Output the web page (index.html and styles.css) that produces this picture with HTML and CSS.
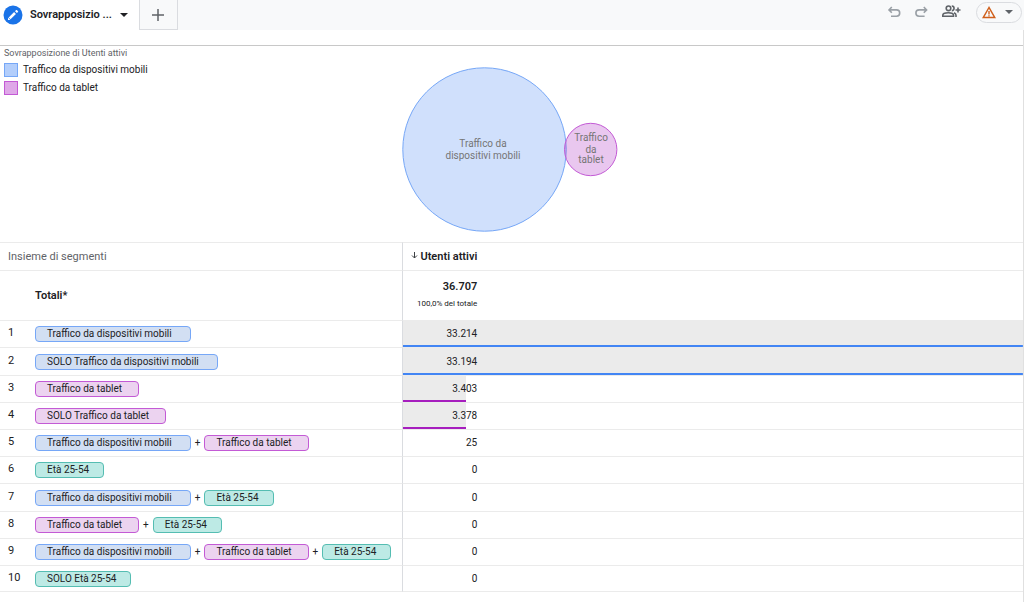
FILE: index.html
```html
<!DOCTYPE html>
<html lang="it">
<head>
<meta charset="utf-8">
<title>Sovrapposizione segmenti</title>
<link rel="stylesheet" href="styles.css">
</head>
<body>
<header class="topbar">
  <nav class="tabs">
    <button class="tab" type="button">
      <svg class="tab-icon" width="20" height="20" viewBox="0 0 20 20" aria-hidden="true"><circle cx="10" cy="10" r="9.500" fill="#1a73e8"/><path d="M6.600 13.400 12 8" stroke="#fff" stroke-width="2.600"/><path d="M5 15v-2.400L7.400 15ZM12 6.200l1.100-1.100q.4-.4.8 0l1.100 1.100q.4.4 0 .8L13.900 8.100Z" fill="#fff"/></svg>
      <span>Sovrapposizio ...</span>
      <svg width="8" height="4" viewBox="0 0 8 4" aria-hidden="true"><path d="M0 0h8L4 4z" fill="#202124"/></svg>
    </button>
    <button class="tab-add" type="button" aria-label="Aggiungi scheda"><svg width="14" height="14" viewBox="0 0 14 14" aria-hidden="true"><path d="M7 1v12M1 7h12" stroke="#5f6368" stroke-width="1.500"/></svg></button>
  </nav>
  <div class="actions">
    <button class="action" type="button" aria-label="Annulla"><svg width="14" height="14" viewBox="0 0 14 14" fill="none" stroke="#9aa0a6" stroke-width="1.600" aria-hidden="true"><path d="M4.800 2 2 4.900 4.800 7.800M2.200 4.900h7.300a3.200 3.200 0 0 1 0 6.400H4"/></svg></button>
    <button class="action" type="button" aria-label="Ripeti"><svg width="14" height="14" viewBox="0 0 14 14" fill="none" stroke="#9aa0a6" stroke-width="1.600" aria-hidden="true"><path d="M9.800 2l2.800 2.900-2.800 2.900M12.400 4.900H5.100a3.200 3.200 0 0 0 0 6.400h5.500"/></svg></button>
    <button class="action action-share" type="button" aria-label="Condividi"><svg width="20" height="14" viewBox="0 0 20 14" fill="none" stroke="#5f6368" stroke-width="1.600" aria-hidden="true"><circle cx="7.500" cy="3.300" r="2.300"/><path d="M1.800 11.300v-1.100c0-1.500 2.800-2.400 5.500-2.400s5.200.9 5.200 2.400v1.100z"/><path d="M10.800 1c3 0 3 4.600 0 4.600M13 7.800c1.600.6 2 1.300 2 2.400v1.900M17 2.500v5M14.500 5h5"/></svg></button>
    <button class="status" type="button" aria-label="Avvisi">
      <svg width="14" height="13" viewBox="0 0 14 13" aria-hidden="true"><path d="M7 1.500 1.200 11.600h11.600z" fill="none" stroke="#d0601c" stroke-width="1.500"/><path d="M7 5v3.500M7 9.300v1.300" stroke="#d0601c" stroke-width="1.400"/></svg>
      <svg width="8" height="4" viewBox="0 0 8 4" aria-hidden="true"><path d="M0 0h8L4 4z" fill="#5f6368"/></svg>
    </button>
  </div>
</header>
<main class="report">
  <section class="overlap">
    <div class="legend">
      <h1 class="legend-title">Sovrapposizione di Utenti attivi</h1>
      <ul class="legend-list">
        <li class="legend-item"><span class="swatch swatch-blue"></span>Traffico da dispositivi mobili</li>
        <li class="legend-item"><span class="swatch swatch-purple"></span>Traffico da tablet</li>
      </ul>
    </div>
    <svg class="venn" width="216" height="166" viewBox="0 0 216 166" role="img" aria-label="Diagramma di Venn">
      <circle cx="82.500" cy="82.500" r="81.700" fill="#4285f4" fill-opacity=".25" stroke="#76a7f7"/>
      <circle cx="188.700" cy="82.500" r="26.200" fill="#a61ebe" fill-opacity=".25" stroke="#c35ad5"/>
      <g class="venn-label"><text x="81" y="80">Traffico da</text><text x="81" y="92">dispositivi mobili</text><text x="189" y="74">Traffico</text><text x="189" y="86">da</text><text x="189" y="96">tablet</text></g>
    </svg>
  </section>
  <table class="segments">
    <colgroup><col class="col-index"><col class="col-set"><col class="col-metric"><col></colgroup>
    <thead>
      <tr class="head"><th colspan="2" scope="col" class="head-set">Insieme di segmenti</th><th scope="col" class="metric"><svg class="sort" width="7" height="8" viewBox="0 0 7 8" aria-hidden="true"><path d="M3.500 0v6M1 3.500l2.500 2.500L6 3.500" fill="none" stroke="#3c4043"/></svg>Utenti attivi</th><td></td></tr>
      <tr class="totals"><td></td><th scope="row" class="set">Totali*</th><td class="metric"><div class="total">36.707</div><div class="share">100,0% del totale</div></td><td></td></tr>
    </thead>
    <tbody>
      <tr class="row full"><td class="index">1</td><td class="set"><span class="chip blue">Traffico da dispositivi mobili</span></td><td class="metric">33.214</td><td></td></tr>
      <tr class="row full"><td class="index">2</td><td class="set"><span class="chip blue">SOLO Traffico da dispositivi mobili</span></td><td class="metric">33.194</td><td></td></tr>
      <tr class="row part"><td class="index">3</td><td class="set"><span class="chip purple">Traffico da tablet</span></td><td class="metric">3.403</td><td></td></tr>
      <tr class="row part"><td class="index">4</td><td class="set"><span class="chip purple">SOLO Traffico da tablet</span></td><td class="metric">3.378</td><td></td></tr>
      <tr class="row"><td class="index">5</td><td class="set"><div class="chips"><span class="chip blue">Traffico da dispositivi mobili</span>+<span class="chip purple">Traffico da tablet</span></div></td><td class="metric">25</td><td></td></tr>
      <tr class="row"><td class="index">6</td><td class="set"><span class="chip teal">Età 25-54</span></td><td class="metric">0</td><td></td></tr>
      <tr class="row"><td class="index">7</td><td class="set"><div class="chips"><span class="chip blue">Traffico da dispositivi mobili</span>+<span class="chip teal">Età 25-54</span></div></td><td class="metric">0</td><td></td></tr>
      <tr class="row"><td class="index">8</td><td class="set"><div class="chips"><span class="chip purple">Traffico da tablet</span>+<span class="chip teal">Età 25-54</span></div></td><td class="metric">0</td><td></td></tr>
      <tr class="row"><td class="index">9</td><td class="set"><div class="chips"><span class="chip blue">Traffico da dispositivi mobili</span>+<span class="chip purple">Traffico da tablet</span>+<span class="chip teal">Età 25-54</span></div></td><td class="metric">0</td><td></td></tr>
      <tr class="row"><td class="index">10</td><td class="set"><span class="chip teal">SOLO Età 25-54</span></td><td class="metric">0</td><td></td></tr>
    </tbody>
  </table>
</main>
</body>
</html>
```

FILE: styles.css
```css
* { box-sizing: border-box; }
body {
  margin: 0;
  min-height: 100vh;
  display: flex;
  flex-direction: column;
  background: #fff;
  color: #202124;
  font: 10px/12px Roboto, "Liberation Sans", sans-serif;
}
button {
  border: 0;
  padding: 0;
  background: none;
  color: inherit;
  font: inherit;
  cursor: pointer;
}

.topbar {
  display: flex;
  justify-content: space-between;
  height: 30px;
  background: #f8f9fa;
}
.tabs { display: flex; }
.tab {
  display: flex;
  align-items: center;
  padding: 0 11px 0 3px;
  background: #fff;
  font-size: 11px;
  font-weight: 600;
  white-space: nowrap;
}
.tab-icon { margin-right: 7px; }
.tab span { margin-right: 8px; }
.tab-add {
  display: grid;
  place-items: center;
  width: 39px;
  border: solid #dadce0;
  border-width: 0 1px 1px;
}
.actions {
  display: flex;
  align-items: center;
  gap: 13px;
  padding: 0 2px 6px 0;
}
.action { display: flex; }
.status {
  display: flex;
  align-items: center;
  gap: 9px;
  height: 21px;
  margin-left: 2px;
  padding: 0 8px 0 5px;
  border: 1px solid #dadce0;
  border-radius: 11px;
}

.report {
  flex: 1;
  padding-top: 15px;
  border-right: 1px solid #e0e0e0;
}
.overlap {
  display: grid;
  height: 197px;
  border-top: 1px solid #c8c8c8;
}
.legend, .venn { grid-area: 1 / 1; }
.legend { padding: 1px 4px; }
.venn {
  place-self: start center;
  margin: 21px 4px 0 0;
}
.venn-label {
  fill: #757575;
  font-size: 10px;
  text-anchor: middle;
}
.legend-title {
  margin: 0;
  color: #5f6368;
  font-size: 9px;
  font-weight: 400;
}
.legend-list {
  margin: 2px 0 0;
  padding: 0;
  list-style: none;
}
.legend-item {
  display: flex;
  align-items: center;
  gap: 5px;
  height: 18px;
}
.swatch {
  width: 14px;
  height: 14px;
  border: 1px solid;
}
.swatch-blue { background: #b3cefb; border-color: #76a7f7; }
.swatch-purple { background: #dfa8e8; border-color: #c35ad5; }

.segments {
  width: 100%;
  table-layout: fixed;
  border-collapse: separate;
  border-spacing: 0;
}
.col-index { width: 35px; }
.col-set { width: 35.9%; }
.col-metric { width: 75px; }
.segments th, .segments td {
  padding: 0;
  border-top: 1px solid #ebebeb;
  text-align: left;
  white-space: nowrap;
}
.segments .metric {
  border-left: 1px solid #dadce0;
  text-align: right;
}
.head { height: 28px; }
.segments .head-set {
  padding-left: 8px;
  color: #5f6368;
  font-size: 11px;
  font-weight: 400;
}
.segments th { font-size: 11px; font-weight: 600; }
.sort { margin-right: 2px; }
.totals { height: 50px; }
.total {
  margin-bottom: 5px;
  font-size: 11px;
  font-weight: 600;
}
.share { font-size: 8px; }
.row { height: 27px; }
.row:nth-child(5n + 2) { height: 28px; }
.segments .index {
  padding: 0 0 2px 8px;
  font-size: 11px;
}
.row:last-child td { border-bottom: 1px solid #ebebeb; }
.row.full .metric, .row.full .metric + td {
  background: linear-gradient(#4285f4, #4285f4) bottom / 100% 2px no-repeat, #ebebeb;
}
.row.part .metric {
  background:
    linear-gradient(#a61ebe, #a61ebe) left bottom / 63px 2px no-repeat,
    linear-gradient(#ebebeb, #ebebeb) left / 63px 100% no-repeat;
}
.chips {
  display: flex;
  align-items: center;
  gap: 4px;
}
.chip {
  display: block;
  width: max-content;
  height: 16px;
  padding: 1px 16px 0 11px;
  border: 1px solid;
  border-radius: 4px;
}
.blue { padding-right: 18px; background: #d2dff3; border-color: #76a7f7; }
.purple { background: #ecd3f0; border-color: #c35ad5; }
.teal { padding-right: 14px; background: #bdeae5; border-color: #55bdb2; }
```
